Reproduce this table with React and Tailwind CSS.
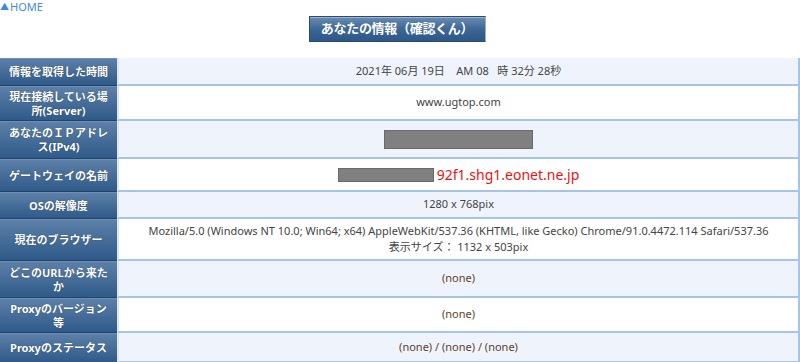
import React from "react";

const F = { fontFamily: '"Noto Sans", "Noto Sans CJK JP", sans-serif' };

function GrayBox({ cls }) {
  return <span className={"inline-block bg-[#808080] border border-[#6a6a6a] " + cls} />;
}

const rows = [
  {
    label: "情報を取得した時間",
    h: "h-[28px]",
    content: (
      <span className="text-[#444]">
        2021年 06月 19日&nbsp;&nbsp;&nbsp;&nbsp;AM 08&nbsp;&nbsp;&nbsp;時 32分 28秒
      </span>
    ),
  },
  { label: "現在接続している場所(Server)", h: "h-[35px]", content: <span className="text-[#444]">www.ugtop.com</span> },
  { label: "あなたのＩＰアドレス(IPv4)", h: "h-[38px]", content: <GrayBox cls="w-[149px] h-[19px]" /> },
  {
    label: "ゲートウェイの名前",
    h: "h-[33px]",
    content: (
      <span className="flex items-center">
        <GrayBox cls="w-[96px] h-[14px]" />
        <span className="text-[#ee1111] text-[14px] ml-[3px]">92f1.shg1.eonet.ne.jp</span>
      </span>
    ),
  },
  { label: "OSの解像度", h: "h-[27px]", content: <span className="text-[#444]">1280 x 768pix</span> },
  {
    label: "現在のブラウザー",
    h: "h-[42px]",
    content: (
      <span className="text-[#444] leading-[16px] text-center">
        Mozilla/5.0 (Windows NT 10.0; Win64; x64) AppleWebKit/537.36 (KHTML, like Gecko) Chrome/91.0.4472.114 Safari/537.36
        <br />
        表示サイズ： 1132 x 503pix
      </span>
    ),
  },
  { label: "どこのURLから来たか", h: "h-[37px]", content: <span className="text-[#5e4228]">(none)</span> },
  { label: "Proxyのバージョン等", h: "h-[35px]", content: <span className="text-[#5e4228]">(none)</span> },
  { label: "Proxyのステータス", h: "h-[30px]", content: <span className="text-[#5e4228]">(none) / (none) / (none)</span> },
];

export default function App() {
  return (
    <div className="w-[800px] h-[362px] overflow-hidden bg-white" style={F}>
      <div className="h-[16px] flex items-start">
        <a className="text-[11px] leading-[14px] text-[#3f8be0] flex items-center">
          <span className="text-[9px] mr-[1px]">▲</span>HOME
        </a>
      </div>
      <div className="flex justify-center pr-[6px]">
        <div className="w-[177px] h-[26px] flex items-center justify-center bg-gradient-to-b from-[#6a8db3] via-[#3d6794] to-[#2c5788] border border-[#2a4c74] border-r-[#9bb1c9] shadow-[inset_0_1px_0_rgba(255,255,255,0.35)]">
          <span className="text-white font-bold text-[13px] tracking-[-0.3px]">あなたの情報（確認くん）</span>
        </div>
      </div>
      <div className="h-[16px]" />
      <div className="flex flex-col">
        {rows.map((r, i) => (
          <div key={i} className={"flex " + r.h}>
            <div className="w-[117px] shrink-0 flex items-center justify-center px-[8px] bg-gradient-to-b from-[#5c80a8] to-[#2f5a89] border-b border-[#1f426b] border-t border-t-[#6f90b4]">
              <span className="text-white font-bold text-[11px] leading-[14px] text-center [text-shadow:0_0_1px_rgba(0,0,0,0.5)]">
                {r.label}
              </span>
            </div>
            <div
              className={
                "flex-1 flex items-center justify-center text-[11px] border-l-2 border-l-[#dde7f3] border-b-2 border-b-[#a4c4e8] border-r-2 border-r-[#a4c4e8] " +
                (i % 2 === 0 ? "bg-[#eff4fc]" : "bg-white")
              }
            >
              {r.content}
            </div>
          </div>
        ))}
      </div>
    </div>
  );
}
